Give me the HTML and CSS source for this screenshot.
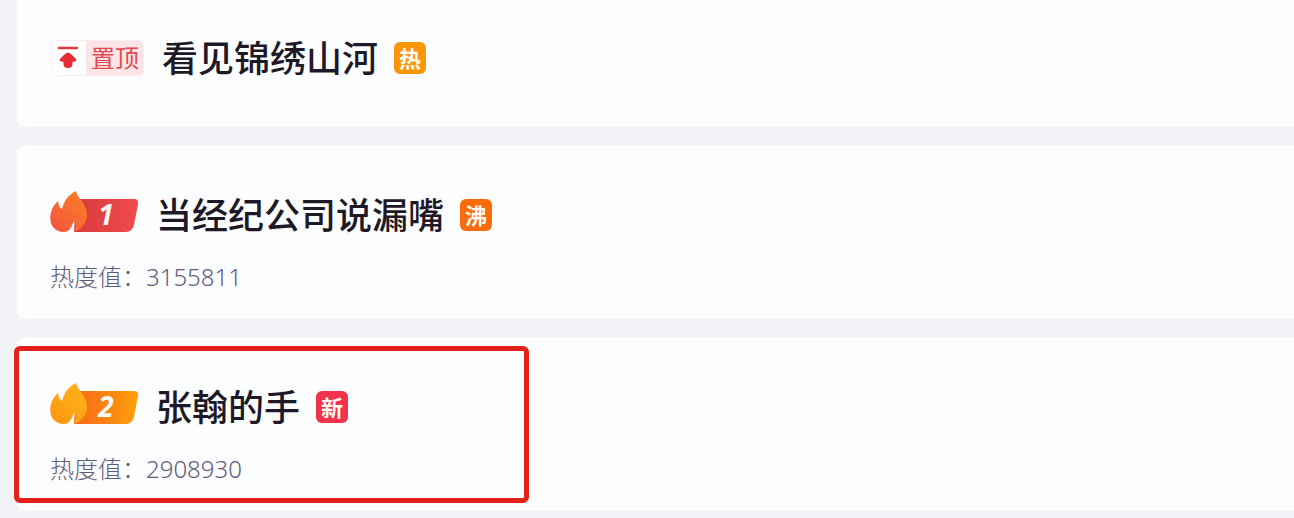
FILE: index.html
```html
<!DOCTYPE html>
<html lang="zh-CN">
<head>
<meta charset="utf-8">
<meta name="viewport" content="width=device-width, initial-scale=1">
<title>热搜榜</title>
<link rel="stylesheet" href="styles.css">
</head>
<body>
<main class="list">
  <article class="card card-pinned">
    <div class="row">
      <span class="pin">
        <span class="pin-icon">
          <svg width="20" height="24" viewBox="0 0 20 24" aria-hidden="true">
            <path d="M1 2H19" stroke="#e0363d" stroke-width="2.6" stroke-linecap="round"/>
            <path d="M10 6.500C12 6.500 18 12.500 18.400 14C18.600 15.200 17.500 15.600 14.500 15.800V18.500Q14 22 10 22Q6 22 5.500 18.500V15.800C2.500 15.600 1.400 15.200 1.600 14C2 12.500 8 6.500 10 6.500Z" fill="#e52b33"/>
          </svg>
        </span>
        <span class="pin-label">置顶</span>
      </span>
      <h2 class="title">看见锦绣山河</h2>
      <span class="tag tag-hot">热</span>
    </div>
  </article>

  <article class="card">
    <div class="row">
      <svg class="rank" width="90" height="48" viewBox="0 0 90 48" role="img" aria-label="1">
        <defs>
          <linearGradient id="bar1"><stop offset="0" stop-color="#d93a3b"/><stop offset="1" stop-color="#f04b4e"/></linearGradient>
          <linearGradient id="flame1" x1="0" y1="1" x2="1" y2="0"><stop offset="0" stop-color="#f4523c"/><stop offset="1" stop-color="#fa8227"/></linearGradient>
        </defs>
        <path d="M26 8H84Q89 8 88 13L84 34Q82 41 76 41H24Z" fill="url(#bar1)"/>
        <path d="M26 0C27 7 37 12 37 24C37 32 31 39 24 41C25 37 27 33 24 30C22 33 22 37 18 40C14 42 7 41 3 36C-2 29 0 17 8 10C9 14 9 16 12 18C14 10 18 4 26 0Z" fill="url(#flame1)"/>
        <text class="rank-num" x="56" y="34">1</text>
      </svg>
      <h2 class="title">当经纪公司说漏嘴</h2>
      <span class="tag tag-boil">沸</span>
    </div>
    <p class="heat">热度值：3155811</p>
  </article>

  <article class="card card-marked">
    <div class="row">
      <svg class="rank" width="90" height="48" viewBox="0 0 90 48" role="img" aria-label="2">
        <defs>
          <linearGradient id="bar2"><stop offset="0" stop-color="#f66c18"/><stop offset="0.5" stop-color="#fa8213"/><stop offset="1" stop-color="#ffa20b"/></linearGradient>
          <linearGradient id="flame2" x1="0" y1="1" x2="1" y2="0"><stop offset="0" stop-color="#ff9410"/><stop offset="1" stop-color="#ffb51b"/></linearGradient>
        </defs>
        <path d="M26 8H84Q89 8 88 13L84 34Q82 41 76 41H24Z" fill="url(#bar2)"/>
        <path d="M26 0C27 7 37 12 37 24C37 32 31 39 24 41C25 37 27 33 24 30C22 33 22 37 18 40C14 42 7 41 3 36C-2 29 0 17 8 10C9 14 9 16 12 18C14 10 18 4 26 0Z" fill="url(#flame2)"/>
        <text class="rank-num" x="56" y="34">2</text>
      </svg>
      <h2 class="title">张翰的手</h2>
      <span class="tag tag-new">新</span>
    </div>
    <p class="heat">热度值：2908930</p>
  </article>
</main>
</body>
</html>
```
FILE: styles.css
```css
*,
*::after {
  box-sizing: border-box;
}

body {
  margin: 0;
  background: #f2f3f7;
  font-family: "Noto Sans", "Noto Sans CJK SC", sans-serif;
  color: #1e1927;
}

.list {
  display: flex;
  flex-direction: column;
  gap: 18px;
  padding: 0 0 7px 17px;
}

.card {
  position: relative;
  padding: 46px 33px 24px;
  background: #fcfdff;
  border-radius: 8px 0 0 8px;
}

.card-pinned {
  padding-top: 34px;
  padding-bottom: 45px;
  border-radius: 0 0 0 8px;
}

.row {
  display: flex;
  align-items: center;
  gap: 16px;
}

.title {
  margin: 0;
  padding-bottom: 4px;
  font-size: 36px;
  font-weight: 500;
  line-height: 44px;
  font-family: "Noto Sans CJK SC", sans-serif;
}

.card-pinned .row {
  min-height: 48px;
}

.heat {
  margin: 20px 0 0;
  font-size: 24px;
  font-weight: 300;
  line-height: 36px;
  color: #615b78;
}

.pin {
  display: flex;
  height: 36px;
  margin: 0 2px;
  border: 1px solid #f8eef1;
  border-radius: 5px;
  overflow: hidden;
  background: #ffffff;
}

.pin-icon {
  display: flex;
  align-items: center;
  padding: 0 8px 0 5px;
}

.pin-label {
  padding: 0 4px 0 5px;
  background: #fde4e6;
  color: #e34750;
  font-size: 24px;
  line-height: 33px;
}

.rank {
  flex: none;
}

.rank-num {
  fill: #fffaf5;
  font-family: "Open Sans", sans-serif;
  font-size: 28px;
  font-style: italic;
  font-weight: 700;
  text-anchor: middle;
}

.tag {
  width: 32px;
  height: 32px;
  border-radius: 6px;
  color: #fffdf5;
  font-size: 22px;
  font-weight: 700;
  line-height: 32px;
  text-align: center;
}

.tag-hot {
  background: #fa9706;
}

.tag-boil {
  background: #f96c09;
}

.tag-new {
  background: #f2334b;
}

/* Highlight frame drawn over the marked entry */
.card-marked::after {
  content: "";
  position: absolute;
  top: 9px;
  left: -3px;
  width: 515px;
  height: 157px;
  border: 5px solid #e32019;
  border-radius: 6px;
}
```
